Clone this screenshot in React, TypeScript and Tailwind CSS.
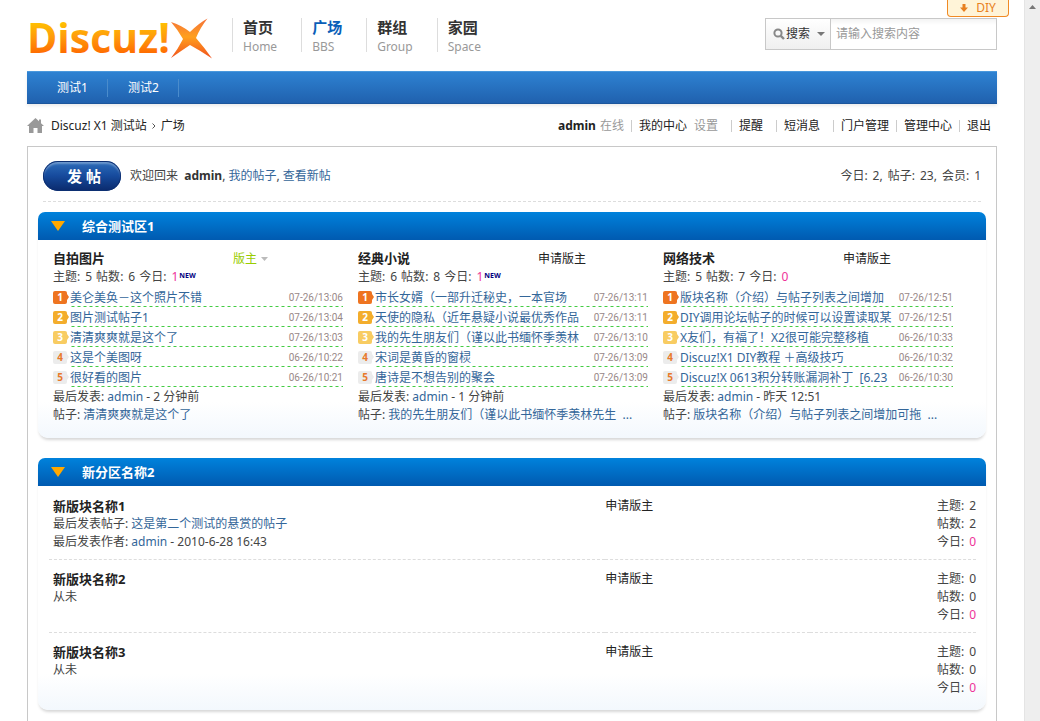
import { FormEvent, JSX, ReactNode, useState } from "react";

interface Topic {
  title: string;
  time: string;
}

interface Board {
  name: string;
  moderator: boolean;
  topics: number;
  posts: number;
  today: number;
  list: Topic[];
  lastTime: string;
  lastTitle: string;
}

interface SubBoard {
  name: string;
  last?: { title: string; author: string; time: string };
  topics: number;
  posts: number;
}

const boards: Board[] = [
  {
    name: "自拍图片",
    moderator: true,
    topics: 5,
    posts: 6,
    today: 1,
    list: [
      { title: "美仑美奂－这个照片不错", time: "07-26/13:06" },
      { title: "图片测试帖子1", time: "07-26/13:04" },
      { title: "清清爽爽就是这个了", time: "07-26/13:03" },
      { title: "这是个美图呀", time: "06-26/10:22" },
      { title: "很好看的图片", time: "06-26/10:21" },
    ],
    lastTime: "2 分钟前",
    lastTitle: "清清爽爽就是这个了",
  },
  {
    name: "经典小说",
    moderator: false,
    topics: 6,
    posts: 8,
    today: 1,
    list: [
      { title: "市长女婿（一部升迁秘史，一本官场", time: "07-26/13:11" },
      { title: "天使的隐私（近年悬疑小说最优秀作品", time: "07-26/13:11" },
      { title: "我的先生朋友们（谨以此书缅怀季羡林", time: "07-26/13:10" },
      { title: "宋词是黄昏的窗棂", time: "07-26/13:09" },
      { title: "唐诗是不想告别的聚会", time: "07-26/13:09" },
    ],
    lastTime: "1 分钟前",
    lastTitle: "我的先生朋友们（谨以此书缅怀季羡林先生  ...",
  },
  {
    name: "网络技术",
    moderator: false,
    topics: 5,
    posts: 7,
    today: 0,
    list: [
      { title: "版块名称（介绍）与帖子列表之间增加", time: "07-26/12:51" },
      { title: "DIY调用论坛帖子的时候可以设置读取某", time: "07-26/12:51" },
      { title: "X友们，有福了！X2很可能完整移植", time: "06-26/10:33" },
      { title: "Discuz!X1 DIY教程 ＋高级技巧", time: "06-26/10:32" },
      { title: "Discuz!X 0613积分转账漏洞补丁  [6.23", time: "06-26/10:30" },
    ],
    lastTime: "昨天 12:51",
    lastTitle: "版块名称（介绍）与帖子列表之间增加可拖  ...",
  },
];

const subBoards: SubBoard[] = [
  {
    name: "新版块名称1",
    last: {
      title: "这是第二个测试的悬赏的帖子",
      author: "admin",
      time: "2010-6-28 16:43",
    },
    topics: 2,
    posts: 2,
  },
  { name: "新版块名称2", topics: 0, posts: 0 },
  { name: "新版块名称3", topics: 0, posts: 0 },
];

const mainNav = [
  { title: "首页", sub: "Home" },
  { title: "广场", sub: "BBS", active: true },
  { title: "群组", sub: "Group" },
  { title: "家园", sub: "Space" },
];

const rankColors = [
  "bg-[#ee7420] text-white",
  "bg-[#f3ad2c] text-white",
  "bg-[#f8cc62] text-white",
  "bg-[#ececec] text-[#e8792b]",
  "bg-[#ececec] text-[#e8792b]",
];

const rankTips = ["#ee7420", "#f3ad2c", "#f8cc62", "#ececec", "#ececec"];

function Logo(): JSX.Element {
  return (
    <svg
      className="overflow-visible"
      width="187"
      height="42"
      viewBox="-2 0 187 42"
      role="img"
      aria-label="Discuz! X"
    >
      <defs>
        <linearGradient id="word" gradientUnits="userSpaceOnUse" x1="0" y1="3" x2="0" y2="36">
          <stop offset="0" stopColor="#ffc400" />
          <stop offset="0.5" stopColor="#ff9a0c" />
          <stop offset="1" stopColor="#ff6a00" />
        </linearGradient>
        <linearGradient id="cross" gradientUnits="userSpaceOnUse" x1="0" y1="0" x2="0" y2="42">
          <stop offset="0" stopColor="#f4703c" />
          <stop offset="0.45" stopColor="#ffa01e" />
          <stop offset="1" stopColor="#f04a1c" />
        </linearGradient>
      </defs>
      <text
        x="-2"
        y="35"
        fontFamily='"Open Sans", sans-serif'
        fontWeight="700"
        fontSize="41"
        fill="url(#word)"
      >
        Discuz!
      </text>
      <path
        d="M142 4 Q152 7 161 14 Q170 5 178.5 0.5 Q171 10 167 20 Q175 29 183 40.5 Q172 33 161 27 Q152 33 142 40 Q149 31 154 21 Q149 12 142 4 Z"
        fill="url(#cross)"
      />
    </svg>
  );
}

function SearchBox(): JSX.Element {
  const [keyword, setKeyword] = useState<string>("");

  const handleSubmit = (event: FormEvent<HTMLFormElement>) => {
    event.preventDefault();
  };

  return (
    <form
      onSubmit={handleSubmit}
      className="flex h-8 w-58 border border-[#c8c8c8] bg-white"
    >
      <button
        type="submit"
        className="flex w-[65px] shrink-0 items-center border-r border-[#c8c8c8] bg-linear-to-b from-white to-[#efefef] pl-[7px] text-[#333]"
      >
        <svg width="12" height="12" viewBox="0 0 12 12" aria-hidden="true">
          <circle cx="5" cy="5" r="3.6" fill="none" stroke="#888" strokeWidth="2" />
          <path d="M7.8 7.8 L11 11" stroke="#888" strokeWidth="2.4" />
        </svg>
        <span className="ml-px">搜索</span>
        <svg className="ml-[7px]" width="8" height="4" viewBox="0 0 8 4" aria-hidden="true">
          <path d="M0 0 H8 L4 4 Z" fill="#777" />
        </svg>
      </button>
      <input
        type="text"
        aria-label="搜索内容"
        className="min-w-0 flex-1 bg-linear-to-b from-[#f3f3f3] to-white to-20% pl-[5px] outline-none placeholder:text-[#999]"
        placeholder="请输入搜索内容"
        value={keyword}
        onChange={(e) => setKeyword(e.target.value)}
      />
    </form>
  );
}

function UserBar(): JSX.Element {
  const item = "border-l border-[#ccc] pl-[7px] leading-3";
  return (
    <div className="flex items-center text-[#222]">
      <a href="#" className="font-bold">
        admin
      </a>
      <span className="ml-1 pr-[7px] text-[#999]">在线</span>
      <span className={`${item} flex gap-[7px] pr-[13px]`}>
        <a href="#">我的中心</a>
        <a href="#" className="text-[#999]">
          设置
        </a>
      </span>
      <a href="#" className={`${item} pr-[13px]`}>
        提醒
      </a>
      <a href="#" className={`${item} pr-[13px]`}>
        短消息
      </a>
      <a href="#" className={`${item} pr-[7px]`}>
        门户管理
      </a>
      <a href="#" className={`${item} pr-[7px]`}>
        管理中心
      </a>
      <a href="#" className={item}>
        退出
      </a>
    </div>
  );
}

function Section({ title, children }: { title: string; children: ReactNode }): JSX.Element {
  return (
    <section className="mb-5 rounded-[10px] bg-[linear-gradient(to_top,#f3f8fd,#ffffff_36px)] shadow-[0_3px_3px_-1px_rgba(0,0,0,0.16)]">
      <h2 className="flex h-7 items-center gap-[17px] rounded-t-[7px] bg-linear-to-b from-[#0082dc] to-[#005ab0] pl-[13px] text-[13px] font-bold text-white">
        <svg width="14" height="10" viewBox="0 0 14 10" aria-hidden="true">
          <path d="M0 0 H14 L7 10 Z" fill="#ffa800" />
        </svg>
        {title}
      </h2>
      {children}
    </section>
  );
}

function Stat({ label, value, hot }: { label: string; value: number; hot?: boolean }): JSX.Element {
  return (
    <span className="inline-flex gap-[5px]">
      <span>{label}:</span>
      <span className={hot ? "text-[#ee3399]" : ""}>{value}</span>
    </span>
  );
}

function BoardColumn({ board }: { board: Board }): JSX.Element {
  return (
    <div className="min-w-0 pr-[15px] whitespace-nowrap">
      <div className="flex">
        <h3 className="w-[180px] text-[13px] leading-4 font-bold text-[#222]">{board.name}</h3>
        {board.moderator ? (
          <a href="#" className="flex items-center gap-1 text-[#99cc00]">
            版主
            <svg width="7" height="4" viewBox="0 0 7 4" aria-hidden="true">
              <path d="M0 0 H7 L3.5 4 Z" fill="#bbb" />
            </svg>
          </a>
        ) : (
          <a href="#" className="text-[#222]">
            申请版主
          </a>
        )}
      </div>
      <p className="flex gap-1">
        <Stat label="主题" value={board.topics} />
        <Stat label="帖数" value={board.posts} />
        <span className="flex">
          <Stat label="今日" value={board.today} hot />
          {board.today > 0 && (
            <b className="ml-px text-[7px] leading-4 text-[#000080]">NEW</b>
          )}
        </span>
      </p>
      <ol className="py-px">
        {board.list.map((topic, i) => (
          <li key={topic.title} className="flex h-5 items-center">
            <span
              className={`h-[13px] w-[14px] rounded-xs text-center text-[10px] leading-[13px] font-bold ${rankColors[i]}`}
            >
              {i + 1}
            </span>
            <svg width="3" height="6" viewBox="0 0 3 6" aria-hidden="true">
              <path d="M0 0 L2 3 L0 6 Z" fill={rankTips[i]} />
            </svg>
            <div className="flex min-w-0 flex-1 items-center bg-[linear-gradient(to_right,#44cc44_50%,transparent_50%)] bg-[length:6px_1px] bg-bottom bg-repeat-x pt-[2px] pb-px">
              <a href="#" className="leading-[17px] whitespace-pre text-[#336699]">
                {topic.title}
              </a>
              <time className="ml-auto font-['Roboto'] text-[10px] leading-4 text-[#998888]">
                {topic.time}
              </time>
            </div>
          </li>
        ))}
      </ol>
      <p>
        最后发表:{" "}
        <a href="#" className="text-[#336699]">
          admin
        </a>{" "}
        - {board.lastTime}
      </p>
      <p>
        帖子:{" "}
        <a href="#" className="whitespace-pre text-[#336699]">
          {board.lastTitle}
        </a>
      </p>
    </div>
  );
}

function SubBoardTable(): JSX.Element {
  return (
    <div className="pt-px pr-[10px] pb-[5px] pl-[11px]">
      <table className="w-full border-collapse">
        <tbody>
          {subBoards.map((board) => (
            <tr
              key={board.name}
              className="border-b border-dashed border-[#dddddd] align-top last:border-b-0"
            >
              <td className="w-[60%] pt-[10px] pb-2 pl-1">
                <h3 className="text-[13px] font-bold text-[#222]">{board.name}</h3>
                {board.last ? (
                  <>
                    <p>
                      最后发表帖子:{" "}
                      <a href="#" className="text-[#336699]">
                        {board.last.title}
                      </a>
                    </p>
                    <p>
                      最后发表作者:{" "}
                      <a href="#" className="text-[#336699]">
                        {board.last.author}
                      </a>{" "}
                      - {board.last.time}
                    </p>
                  </>
                ) : (
                  <p>从未</p>
                )}
              </td>
              <td className="pt-[10px] pb-2">
                <a href="#" className="text-[#222]">
                  申请版主
                </a>
              </td>
              <td className="pt-[10px] pb-2">
                <div className="flex flex-col items-end">
                  <Stat label="主题" value={board.topics} />
                  <Stat label="帖数" value={board.posts} />
                  <Stat label="今日" value={0} hot />
                </div>
              </td>
            </tr>
          ))}
        </tbody>
      </table>
    </div>
  );
}

function App(): JSX.Element {
  return (
    <div className="flex h-screen overflow-hidden bg-white font-['Noto_Sans','Noto_Sans_CJK_SC',sans-serif] text-[12px] leading-[18px] text-[#444]">
      <div className="min-w-0 flex-1">
        <div className="mx-auto w-full max-w-[970px]">
          <header className="relative flex h-[71px] items-start pt-[18px]">
            <a href="#" className="block w-[205px] shrink-0">
              <Logo />
            </a>
            <nav className="flex">
              {mainNav.map((item) => (
                <a
                  key={item.title}
                  href="#"
                  className="block h-[34px] border-l border-[#dddddd] pr-6 pl-[10px]"
                >
                  <span
                    className={`block text-[15px] leading-[18px] font-bold ${
                      item.active ? "text-[#0a5fb8]" : "text-[#333]"
                    }`}
                  >
                    {item.title}
                  </span>
                  <span className="block leading-[22px] text-[#999]">{item.sub}</span>
                </a>
              ))}
            </nav>
            <div className="ml-auto">
              <SearchBox />
            </div>
            <button
              type="button"
              className="absolute top-0 -right-3 flex h-[17px] w-[62px] items-center justify-center gap-2 rounded-b-sm border border-t-0 border-[#f08a24] bg-[#fff4d8] text-[#e88020]"
            >
              <svg width="8" height="8" viewBox="0 0 8 8" aria-hidden="true">
                <path d="M2.5 0 H5.5 V3.5 H8 L4 8 L0 3.5 H2.5 Z" fill="#e88020" />
              </svg>
              <span className="leading-3">DIY</span>
            </button>
          </header>

          <nav className="flex h-[33px] items-center border-t border-b border-t-[#4a98dc] border-b-[#1c569c] bg-linear-to-b from-[#2e82d2] to-[#2061ae] pl-[10px] text-white shadow-[0_2px_3px_rgba(0,0,0,0.08)]">
            <a href="#" className="border-r border-[#4a8ccc] pr-[19px] pl-5">
              测试1
            </a>
            <a href="#" className="border-r border-[#4a8ccc] pr-[19px] pl-5">
              测试2
            </a>
          </nav>

          <div className="flex h-[42px] items-center justify-between pt-px pr-[6px]">
            <div className="flex items-center text-[#222]">
              <a href="#" aria-label="首页" className="mr-[7px]">
                <svg width="17" height="15" viewBox="0 0 17 15" aria-hidden="true">
                  <path
                    d="M8.5 0 L12 3.3 V1.5 H14 V5.2 L17 8 H15 V15 H10.5 V10 H6.5 V15 H2 V8 H0 Z"
                    fill="#999"
                  />
                </svg>
              </a>
              <a href="#">Discuz! X1 测试站</a>
              <svg className="mx-[5px]" width="4" height="6" viewBox="0 0 4 6" aria-hidden="true">
                <path d="M0.5 0.5 L3 3 L0.5 5.5" fill="none" stroke="#555" />
              </svg>
              <a href="#">广场</a>
            </div>
            <UserBar />
          </div>

          <main className="border border-[#c8c8c8] px-[10px] pt-[14px]">
            <div className="mx-[5px] mb-[10px] flex items-center border-b border-dashed border-[#dddddd] pb-[10px]">
              <button
                type="button"
                className="h-[30px] w-[78px] rounded-full bg-linear-to-b from-[#2f6fbc] via-[#164a9c] to-[#0b2a6c] pl-1 text-[15px] leading-5 font-bold text-white shadow-[inset_0_0_0_1px_#0c2f72,inset_0_3px_2px_rgba(255,255,255,0.3)]"
              >
                发 帖
              </button>
              <p className="ml-[9px]">
                欢迎回来&nbsp;{" "}
                <a href="#" className="font-bold text-[#333]">
                  admin
                </a>
                ,{" "}
                <a href="#" className="text-[#336699]">
                  我的帖子
                </a>
                ,{" "}
                <a href="#" className="text-[#336699]">
                  查看新帖
                </a>
              </p>
              <p className="ml-auto flex gap-[5px]">
                <span className="inline-flex">
                  <Stat label="今日" value={2} />,
                </span>
                <span className="inline-flex">
                  <Stat label="帖子" value={23} />,
                </span>
                <Stat label="会员" value={1} />
              </p>
            </div>

            <Section title="综合测试区1">
              <div className="grid grid-cols-3 pt-[10px] pr-[18px] pb-[14px] pl-[15px]">
                {boards.map((board) => (
                  <BoardColumn key={board.name} board={board} />
                ))}
              </div>
            </Section>

            <Section title="新分区名称2">
              <SubBoardTable />
            </Section>
          </main>
        </div>
      </div>

      {/* scroll track */}
      <div className="flex w-4 shrink-0 justify-center border-l border-[#e4e4e4] bg-[#eeeeee] pt-[5px]">
        <svg width="7" height="4" viewBox="0 0 7 4" aria-hidden="true">
          <path d="M0 4 H7 L3.5 0 Z" fill="#777" />
        </svg>
      </div>
    </div>
  );
}

export default App;
